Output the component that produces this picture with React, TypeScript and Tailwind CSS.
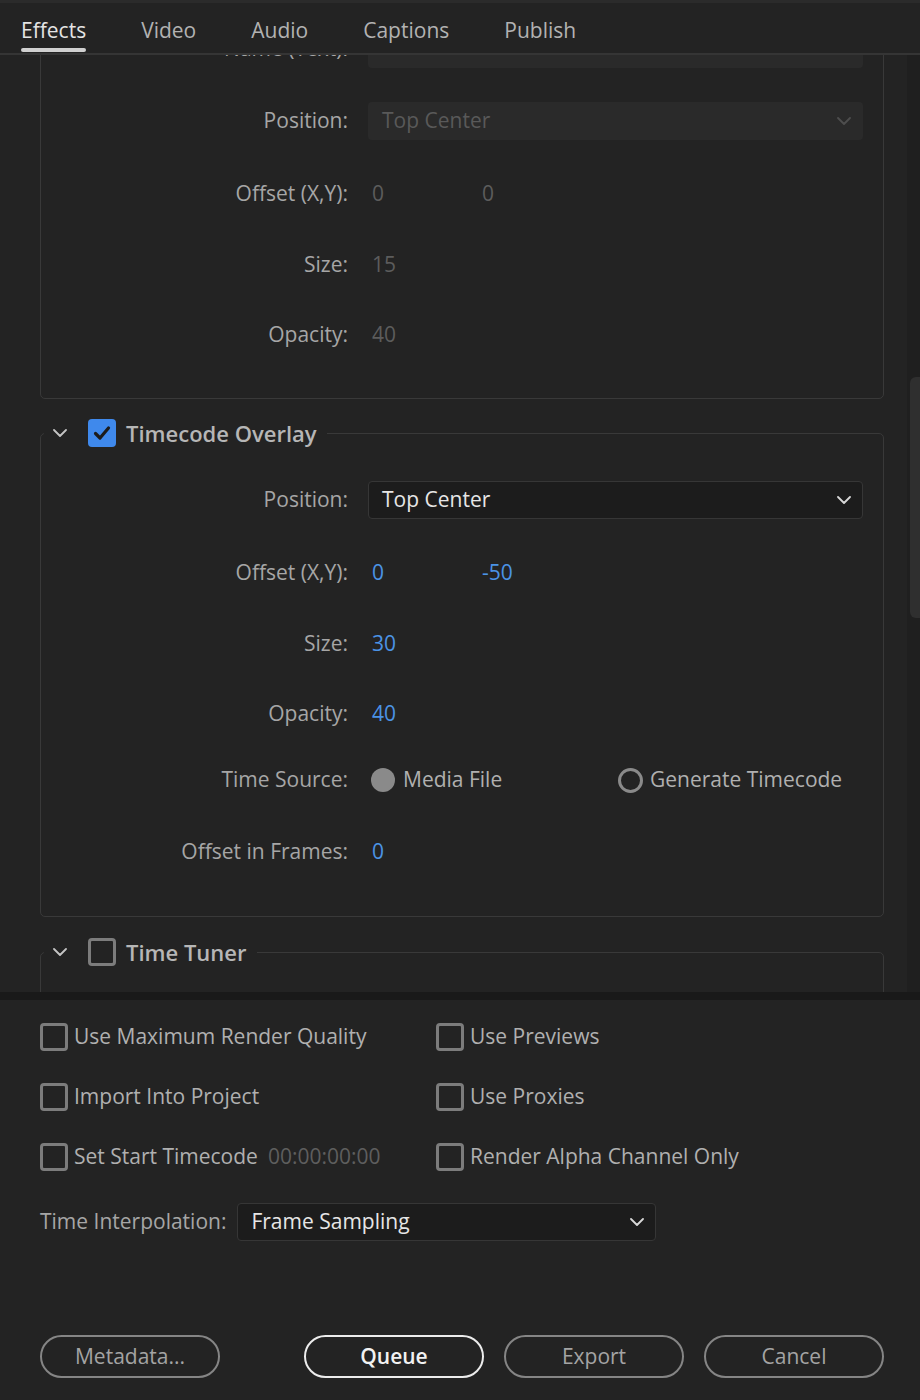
import type { ReactNode } from "react";

const font = { fontFamily: '"Open Sans", "Liberation Sans", sans-serif' };

function Chevron({ className }: { className?: string }) {
  return (
    <svg viewBox="0 0 14 8" className={className} fill="none">
      <path d="M1 1l6 6 6-6" stroke="currentColor" strokeWidth="1.8" strokeLinecap="round" strokeLinejoin="round" />
    </svg>
  );
}

function Checkbox({ checked }: { checked?: boolean }) {
  if (checked) {
    return (
      <span className="flex size-[28px] shrink-0 items-center justify-center rounded-[4px] bg-[#3f89ec]">
        <svg viewBox="0 0 28 28" className="size-[28px]" fill="none">
          <path d="M7.5 14.5l4.5 4.5 8.5-10" stroke="#1c1c1c" strokeWidth="3.2" strokeLinecap="round" strokeLinejoin="round" />
        </svg>
      </span>
    );
  }
  return <span className="block size-[28px] shrink-0 rounded-[4px] border-[3px] border-[#7c7c7c]" />;
}

function Row({ label, children, className }: { label: string; children: ReactNode; className?: string }) {
  return (
    <div className={`flex h-[40px] items-center ${className ?? ""}`}>
      <div className="w-[307px] shrink-0 text-right text-[21px] text-[#a6a6a6]">{label}</div>
      <div className="ml-[20px] flex flex-1 items-center">{children}</div>
    </div>
  );
}

function Select({ value, disabled, chevron = true }: { value: string; disabled?: boolean; chevron?: boolean }) {
  return (
    <div
      className={
        disabled
          ? "flex h-[38px] w-[495px] items-center justify-between rounded-[4px] bg-[#2a2a2a] pl-[14px] pr-[12px] text-[21px] text-[#595959]"
          : "flex h-[38px] w-[495px] items-center justify-between rounded-[4px] border border-[#363636] bg-[#1c1c1c] pl-[13px] pr-[11px] text-[21px] text-[#e6e6e6]"
      }
    >
      <span>{value}</span>
      {chevron && <Chevron className={disabled ? "h-[8px] w-[14px] text-[#4e4e4e]" : "h-[8px] w-[14px] text-[#d8d8d8]"} />}
    </div>
  );
}

function Val({ children, dim, className }: { children: ReactNode; dim?: boolean; className?: string }) {
  return (
    <span className={`pl-[4px] text-[21px] ${dim ? "text-[#5c5c5c]" : "text-[#4b93e6]"} ${className ?? ""}`}>
      {children}
    </span>
  );
}

function SectionHeader({ title, checked }: { title: string; checked?: boolean }) {
  return (
    <div className="-mt-[15px] flex h-[28px]">
      <div className="ml-[3px] flex items-center bg-[#232323] pl-[9px] pr-[10px]">
        <Chevron className="h-[8px] w-[14px] text-[#c4c4c4]" />
        <span className="ml-[21px] block">
          <Checkbox checked={checked} />
        </span>
        <span className="ml-[10px] text-[22px] font-semibold text-[#b6b6b6]">{title}</span>
      </div>
    </div>
  );
}

function Button({ children, primary, className }: { children: ReactNode; primary?: boolean; className?: string }) {
  return (
    <button
      type="button"
      className={`flex h-[43px] w-[180px] items-center justify-center rounded-full border-2 text-[21px] ${
        primary ? "border-[#ececec] font-semibold text-[#f2f2f2]" : "border-[#858585] text-[#a4a4a4]"
      } ${className ?? ""}`}
    >
      {children}
    </button>
  );
}

function Option({ label, className }: { label: string; className?: string }) {
  return (
    <div className={`flex h-[28px] items-center ${className ?? ""}`}>
      <Checkbox />
      <span className="ml-[6px] text-[21px] text-[#b0b0b0]">{label}</span>
    </div>
  );
}

export default function App() {
  const tabs = ["Effects", "Video", "Audio", "Captions", "Publish"];

  return (
    <div className="h-[1400px] w-[920px] overflow-hidden bg-[#232323]" style={font}>
      {/* tab bar */}
      <div className="flex h-[55px] border-t-[3px] border-b-2 border-t-[#2b2b2b] border-b-[#353535] pl-[21px]">
        <div className="flex gap-[55px]">
          {tabs.map((t, i) => (
            <div key={t} className="flex flex-col items-stretch">
              <span className={`mt-[13px] text-[21px] leading-[28px] ${i === 0 ? "text-[#e4e4e4]" : "text-[#b2b2b2]"}`}>
                {t}
              </span>
              {i === 0 && <span className="mt-[4px] h-[4px] rounded-full bg-[#d0d0d0]" />}
            </div>
          ))}
        </div>
      </div>

      {/* scrolling effects list */}
      <div className="flex h-[937px]">
        <div className="flex-1 overflow-hidden pl-[40px] pr-[23px]">
          <div className="-mt-[75px]">
            <div className="rounded-[5px] border border-[#393939] pt-[48px] pb-[43px]">
              <Row label="Name (Text):">
                <Select value="" disabled chevron={false} />
              </Row>
              <Row label="Position:" className="mt-[32px]">
                <Select value="Top Center" disabled />
              </Row>
              <Row label="Offset (X,Y):" className="mt-[33px]">
                <Val dim className="w-[110px]">0</Val>
                <Val dim>0</Val>
              </Row>
              <Row label="Size:" className="mt-[31px]">
                <Val dim>15</Val>
              </Row>
              <Row label="Opacity:" className="mt-[30px]">
                <Val dim>40</Val>
              </Row>
            </div>

            <div className="mt-[34px] rounded-[5px] border border-[#393939] pb-[44px]">
              <SectionHeader title="Timecode Overlay" checked />
              <Row label="Position:" className="mt-[33px]">
                <Select value="Top Center" />
              </Row>
              <Row label="Offset (X,Y):" className="mt-[33px]">
                <Val className="w-[110px]">0</Val>
                <Val>-50</Val>
              </Row>
              <Row label="Size:" className="mt-[31px]">
                <Val>30</Val>
              </Row>
              <Row label="Opacity:" className="mt-[30px]">
                <Val>40</Val>
              </Row>
              <Row label="Time Source:" className="mt-[26px]">
                <div className="flex w-[250px] items-center pl-[3px]">
                  <span className="size-[24px] rounded-full bg-[#8a8a8a]" />
                  <span className="ml-[8px] text-[21px] text-[#b0b0b0]">Media File</span>
                </div>
                <div className="flex items-center">
                  <span className="size-[25px] rounded-full border-[3px] border-[#8a8a8a]" />
                  <span className="ml-[7px] text-[21px] text-[#b0b0b0]">Generate Timecode</span>
                </div>
              </Row>
              <Row label="Offset in Frames:" className="mt-[32px]">
                <Val>0</Val>
              </Row>
            </div>

            <div className="mt-[35px] h-[200px] rounded-[5px] border border-[#393939]">
              <SectionHeader title="Time Tuner" />
            </div>
          </div>
        </div>
        <div className="w-[13px] bg-[#1f1f1f] pt-[322px]">
          <div className="ml-[3px] h-[241px] rounded-l-[6px] bg-[#2f2f2f]" />
        </div>
      </div>

      <div className="h-[8px] bg-[#191919]" />

      {/* export options */}
      <div className="h-[400px] pl-[40px] pt-[23px]">
        <div className="grid grid-cols-[396px_1fr] gap-y-[32px]">
          <Option label="Use Maximum Render Quality" />
          <Option label="Use Previews" />
          <Option label="Import Into Project" />
          <Option label="Use Proxies" />
          <div className="flex h-[28px] items-center">
            <Checkbox />
            <span className="ml-[6px] text-[21px] text-[#b0b0b0]">Set Start Timecode</span>
            <span className="ml-[10px] text-[21px] text-[#5e5e5e]">00:00:00:00</span>
          </div>
          <Option label="Render Alpha Channel Only" />
        </div>

        <div className="mt-[32px] flex h-[38px] items-center">
          <span className="text-[21px] text-[#a6a6a6]">Time Interpolation:</span>
          <div className="ml-[11px] flex h-[38px] w-[419px] items-center justify-between rounded-[4px] border border-[#363636] bg-[#1c1c1c] pl-[13px] pr-[11px] text-[21px] text-[#e6e6e6]">
            <span>Frame Sampling</span>
            <Chevron className="h-[8px] w-[14px] text-[#d8d8d8]" />
          </div>
        </div>

        <div className="mt-[94px] flex">
          <Button>Metadata...</Button>
          <Button primary className="ml-[84px]">Queue</Button>
          <Button className="ml-[20px]">Export</Button>
          <Button className="ml-[20px]">Cancel</Button>
        </div>
      </div>
    </div>
  );
}
